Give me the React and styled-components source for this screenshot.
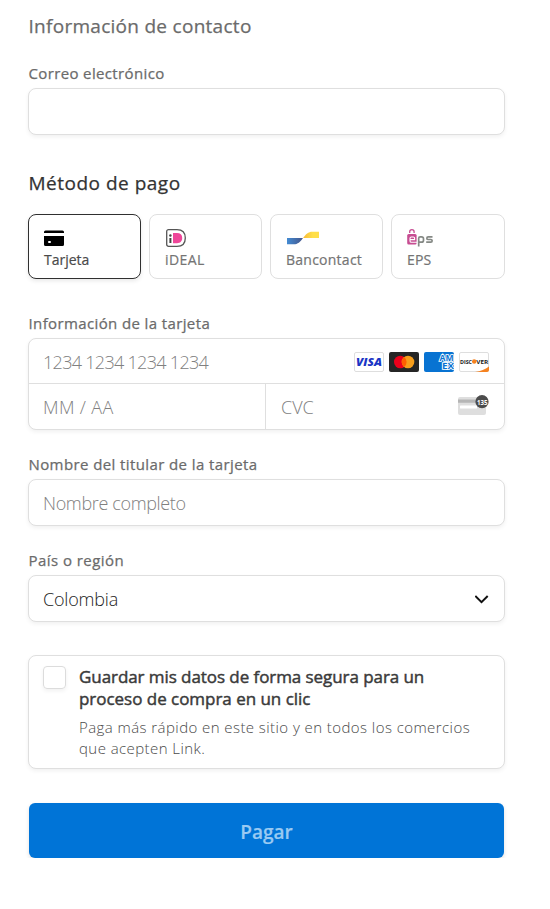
import React from "react";
import styled, { createGlobalStyle } from "styled-components";

const GlobalStyle = createGlobalStyle`
  * { box-sizing: border-box; }
  body { margin: 0; background: #fff; font-family: "Open Sans", "Noto Sans", sans-serif; }
`;

const Form = styled.form`
  width: 477px;
  margin-left: 28px;
  padding-top: 12px;
  display: flex;
  flex-direction: column;
`;

const Text = styled.span`
  display: block;
  white-space: nowrap;
  font-size: ${(p) => p.$size}px;
  font-weight: ${(p) => p.$weight || 400};
  letter-spacing: ${(p) => p.$track || 0}px;
  color: ${(p) => p.$color || "#6b6b6b"};
  -webkit-text-stroke: ${(p) => p.$stroke || 0}px currentColor;
`;

const Heading = styled(Text).attrs({ as: "h2", $size: 19, $stroke: 0.25 })`
  margin: ${(p) => p.$top || 0}px 0 0 0.5px;
  height: 28px;
  line-height: 28px;
`;

const Label = styled(Text).attrs({ as: "label", $size: 15, $stroke: 0.25 })`
  margin: ${(p) => p.$top}px 0 5px 0.5px;
  height: 20px;
  line-height: 20px;
`;

const Placeholder = styled(Text).attrs({ $size: 18, $weight: 300 })`
  color: ${(p) => p.$color || "#808080"};
`;

const Panel = styled.div`
  border: 1px solid #dfdfdf;
  border-radius: 8px;
  background: #fff;
  box-shadow: 0 2px 4px rgba(0, 0, 0, 0.06);
`;

const Field = styled(Panel)`
  height: 47px;
  padding: 0 15px 0 14px;
  display: flex;
  align-items: center;
  justify-content: space-between;
  svg { margin-top: 2px; }
`;

const Methods = styled.div`
  display: grid;
  grid-template-columns: 113px 113px 113px 114px;
  gap: 8px;
  margin-top: 17px;
`;

const Method = styled(Panel)`
  height: 65px;
  padding: 14px 0 0 15px;
  border-color: ${(p) => (p.$selected ? "#303030" : "#dfdfdf")};
  box-shadow: ${(p) => (p.$selected ? "0 2px 4px rgba(0,0,0,.09)" : "none")};
`;

const MethodIcon = styled.div`
  height: 19px;
  svg { display: block; overflow: visible; }
`;

const MethodName = styled(Text)`
  height: 22px;
  line-height: 23px;
`;

const CardPanel = styled(Panel)`
  height: 92px;
  display: grid;
  grid-template-rows: 44px 46px;
  overflow: hidden;
`;

const CardRow = styled.div`
  display: flex;
  align-items: center;
  justify-content: space-between;
  padding: ${(p) => p.$pad || 0}px 15px 0 14px;
`;

const SplitRow = styled.div`
  display: grid;
  grid-template-columns: 236px 1fr;
  border-top: 1px solid #dfdfdf;
`;

const SplitCell = styled(CardRow)`
  border-left: ${(p) => (p.$divided ? "1px solid #dfdfdf" : "0")};
  padding-left: ${(p) => (p.$divided ? 15 : 14)}px;
  svg { display: block; margin-bottom: 4px; }
`;

const Brands = styled.div`
  display: flex;
  gap: 5px;
  svg { display: block; }
`;

const SavePanel = styled(Panel)`
  height: 114px;
  margin-top: 33px;
  padding: 10px 14px;
  display: flex;
  gap: 13px;
`;

const Checkbox = styled.div`
  width: 23px;
  height: 23px;
  border: 1px solid #dcdcdc;
  border-radius: 4px;
  box-shadow: 0 2px 4px rgba(0, 0, 0, 0.06);
`;

const SaveTitle = styled(Text)`
  line-height: 22px;
`;

const SaveNote = styled(Text)`
  line-height: 21px;
`;

const SaveCopy = styled.div`
  display: flex;
  flex-direction: column;
  ${SaveNote}:nth-child(3) { margin-top: 7px; }
`;

const PayButton = styled.button`
  height: 55px;
  margin: 34px 1px 0;
  padding: 3px 0 0;
  border: 0;
  border-radius: 6px;
  background: #0074d7;
  box-shadow: 0 2px 4px rgba(0, 0, 0, 0.12);
  display: flex;
  align-items: center;
  justify-content: center;
  font-family: inherit;
`;

const CardIcon = () => (
  <svg width="20" height="18" viewBox="0 0 20 18">
    <path d="M0 4V3a1.500 1.500 0 0 1 1.500-1.500h17A1.500 1.500 0 0 1 20 3v1zM0 7h20v8.500a1.500 1.500 0 0 1-1.500 1.500h-17A1.500 1.500 0 0 1 0 15.500z" />
    <rect x="4" y="12" width="3" height="2" rx="1" fill="#fff" />
  </svg>
);

const IdealIcon = () => (
  <svg width="21" height="18" viewBox="-1 0 21 18">
    <path d="M2.500.6H11c5 0 8.300 3 8.300 8.400s-3.300 8.400-8.300 8.400H2.500A1.800 1.800 0 0 1 .7 15.600V2.400A1.800 1.800 0 0 1 2.500.6z" fill="#fff" stroke="#555" strokeWidth="1.300" />
    <path d="M7 4h4c3.200 0 5.200 1.800 5.200 5s-2 5.200-5.200 5.200H7z" fill="#ee4699" />
    <circle cx="4.400" cy="6.500" r="1.200" fill="#444" />
    <path d="M3.400 9h2v5h-2z" fill="#444" />
  </svg>
);

const BancontactIcon = () => (
  <svg width="32" height="18" viewBox="-1 0 32 18">
    <defs>
      <linearGradient id="bcBlue"><stop stopColor="#438bd3" /><stop offset="1" stopColor="#45568b" /></linearGradient>
      <linearGradient id="bcGold"><stop stopColor="#f7b837" /><stop offset=".6" stopColor="#ffdf49" /></linearGradient>
    </defs>
    <path d="M0 9h16c-3 4-5 6.300-9.500 6.300H0z" fill="url(#bcBlue)" />
    <path d="M16 9c3-4 5-6.300 9.500-6.300H32V9z" fill="url(#bcGold)" />
  </svg>
);

const EpsIcon = () => (
  <svg width="27" height="18" viewBox="0 0 27 18" fill="none">
    <path d="M2.700 4V2.800a2.200 2.200 0 0 1 4.400 0V4" stroke="#c74d92" strokeWidth="1.300" />
    <rect x=".2" y="5" width="9.400" height="10.500" rx="1.500" fill="#c74d92" />
    <path d="M8.500 13.200H4.300A1.300 1.300 0 0 1 3 11.900V9.300A1.300 1.300 0 0 1 4.300 8h2A1.300 1.300 0 0 1 7.600 9.300v1.300H3M7 13.200h3" stroke="#fff" strokeWidth="1.100" />
    <path d="M11.700 17.500V9.300a1.500 1.500 0 0 1 1.500-1.500h1.300a2 2 0 0 1 2 2v1.400a2 2 0 0 1-2 2h-2.800M25.500 7.800h-4.300a1.350 1.350 0 0 0 0 2.700h2.600a1.350 1.350 0 0 1 0 2.700h-4.600" stroke="#858985" strokeWidth="1.700" />
  </svg>
);

const VisaIcon = () => (
  <svg width="30" height="20" viewBox="0 0 30 20">
    <rect x=".5" y=".5" width="29" height="19" rx="1.500" fill="#fff" stroke="#dedede" />
    <text x="2" y="14" textLength="26" lengthAdjust="spacingAndGlyphs" fontFamily="Open Sans" fontStyle="italic" fontWeight="800" fontSize="11" fill="#1a35c5">VISA</text>
  </svg>
);

const MastercardIcon = () => (
  <svg width="30" height="20" viewBox="0 0 30 20">
    <rect width="30" height="20" rx="2" fill="#252525" />
    <circle cx="11.300" cy="10" r="6.300" fill="#eb001b" />
    <circle cx="19" cy="10" r="6.300" fill="#f79e1b" />
    <path d="M15.150 5a6.300 6.300 0 0 1 0 10 6.300 6.300 0 0 1 0-10z" fill="#ff5f00" />
  </svg>
);

const AmexIcon = () => (
  <svg width="30" height="20" viewBox="0 0 30 20">
    <rect width="30" height="20" rx="2" fill="#0873d2" />
    <g fontFamily="Open Sans" fontWeight="700" fontSize="8.500" fill="#0873d2" stroke="#fff" strokeWidth="1.700" paintOrder="stroke">
      <text x="15.500" y="9.300" textLength="14" lengthAdjust="spacingAndGlyphs">AM</text>
      <text x="18" y="16.700" textLength="12" lengthAdjust="spacingAndGlyphs">EX</text>
    </g>
  </svg>
);

const DiscoverIcon = () => (
  <svg width="30" height="20" viewBox="0 0 30 20">
    <rect x=".5" y=".5" width="29" height="19" rx="1.500" fill="#fff" stroke="#dedede" />
    <path d="M30 14.500V18a2 2 0 0 1-2 2H16c6-1 10-2.600 14-5.500z" fill="#f58220" />
    <g fontFamily="Open Sans" fontWeight="700" fontSize="5.800" fill="#202020">
      <text x="1" y="11.600" textLength="12" lengthAdjust="spacingAndGlyphs">DISC</text>
      <text x="17.300" y="11.600" textLength="12" lengthAdjust="spacingAndGlyphs">VER</text>
    </g>
    <circle cx="15.200" cy="9.500" r="2.200" fill="#f58220" />
  </svg>
);

const CvcIcon = () => (
  <svg width="31" height="22" viewBox="0 0 31 22">
    <rect y="3" width="28" height="18" rx="2" fill="#dedede" />
    <path d="M0 5.500h28v3.200H0z" fill="#b5b5b5" />
    <rect x="2" y="11.500" width="17" height="3" rx=".5" fill="#fff" />
    <circle cx="24" cy="7.700" r="6.600" fill="#4c4c4c" />
    <text x="18.900" y="10.500" textLength="10.500" lengthAdjust="spacingAndGlyphs" fontFamily="Open Sans" fontWeight="700" fontSize="7.500" fill="#fff">135</text>
  </svg>
);

const Chevron = () => (
  <svg width="14" height="14" viewBox="0 0 14 14" fill="none">
    <path d="M.3 3 6.500 9.100 12.700 3" stroke="#101010" strokeWidth="2" />
  </svg>
);

const methods = [
  { name: "Tarjeta", Icon: CardIcon, selected: true, color: "#4a4a4a" },
  { name: "iDEAL", Icon: IdealIcon, color: "#747474", track: 0.4 },
  { name: "Bancontact", Icon: BancontactIcon, color: "#747474", track: 0.25 },
  { name: "EPS", Icon: EpsIcon, color: "#747474", track: 0.2 },
];

export default function App() {
  return (
    <>
      <GlobalStyle />
      <Form>
        <Heading $track={0.28}>Información de contacto</Heading>
        <Label $top={23} $track={0.36}>Correo electrónico</Label>
        <Field />
        <Heading $top={34} $track={0.5} $color="#333">Método de pago</Heading>
        <Methods>
          {methods.map(({ name, Icon, selected, color, track }) => (
            <Method key={name} $selected={selected}>
              <MethodIcon><Icon /></MethodIcon>
              <MethodName $size={14} $stroke={0.2} $color={color} $track={track}>{name}</MethodName>
            </Method>
          ))}
        </Methods>
        <Label $top={34} $track={0.38}>Información de la tarjeta</Label>
        <CardPanel>
          <CardRow $pad={2}>
            <Placeholder $track={-0.7}>1234 1234 1234 1234</Placeholder>
            <Brands><VisaIcon /><MastercardIcon /><AmexIcon /><DiscoverIcon /></Brands>
          </CardRow>
          <SplitRow>
            <SplitCell $pad={1}><Placeholder $track={0.35}>MM / AA</Placeholder></SplitCell>
            <SplitCell $pad={1} $divided><Placeholder>CVC</Placeholder><CvcIcon /></SplitCell>
          </SplitRow>
        </CardPanel>
        <Label $top={24} $track={0.4}>Nombre del titular de la tarjeta</Label>
        <Field><Placeholder $track={-0.35}>Nombre completo</Placeholder></Field>
        <Label $top={24} $track={0.45}>País o región</Label>
        <Field><Placeholder $color="#222" $track={-0.2}>Colombia</Placeholder><Chevron /></Field>
        <SavePanel>
          <Checkbox />
          <SaveCopy>
            <SaveTitle $size={17} $stroke={0.45} $track={-0.07} $color="#3a3a3a">Guardar mis datos de forma segura para un</SaveTitle>
            <SaveTitle $size={17} $stroke={0.45} $track={-0.03} $color="#3a3a3a">proceso de compra en un clic</SaveTitle>
            <SaveNote $size={15} $weight={300} $track={0.43} $color="#4a4a4a">Paga más rápido en este sitio y en todos los comercios</SaveNote>
            <SaveNote $size={15} $weight={300} $track={0.43} $color="#4a4a4a">que acepten Link.</SaveNote>
          </SaveCopy>
        </SavePanel>
        <PayButton type="button"><Text $size={19} $weight={600} $stroke={0.2} $color="#9acaf2">Pagar</Text></PayButton>
      </Form>
    </>
  );
}
